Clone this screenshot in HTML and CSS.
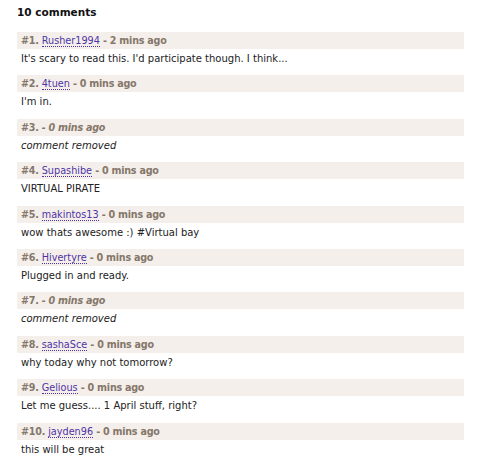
FILE: index.html
```html
<!DOCTYPE html>
<html>
<head>
<meta charset="utf-8">
<link rel="stylesheet" href="styles.css">
</head>
<body>
<div class="comments">
  <h3 class="title">10 comments</h3>
  <div class="comment">
    <div class="meta"><span class="num">#1.</span> <a class="user" href="#">Rusher1994</a> <span class="time">- 2 mins ago</span></div>
    <div class="body">It's scary to read this. I'd participate though. I think...</div>
  </div>
  <div class="comment">
    <div class="meta"><span class="num">#2.</span> <a class="user" href="#">4tuen</a> <span class="time">- 0 mins ago</span></div>
    <div class="body">I'm in.</div>
  </div>
  <div class="comment removed">
    <div class="meta"><span class="num">#3.</span> <span class="time">- 0 mins ago</span></div>
    <div class="body">comment removed</div>
  </div>
  <div class="comment">
    <div class="meta"><span class="num">#4.</span> <a class="user" href="#">Supashibe</a> <span class="time">- 0 mins ago</span></div>
    <div class="body">VIRTUAL PIRATE</div>
  </div>
  <div class="comment">
    <div class="meta"><span class="num">#5.</span> <a class="user" href="#">makintos13</a> <span class="time">- 0 mins ago</span></div>
    <div class="body">wow thats awesome :) #Virtual bay</div>
  </div>
  <div class="comment">
    <div class="meta"><span class="num">#6.</span> <a class="user" href="#">Hivertyre</a> <span class="time">- 0 mins ago</span></div>
    <div class="body">Plugged in and ready.</div>
  </div>
  <div class="comment removed">
    <div class="meta"><span class="num">#7.</span> <span class="time">- 0 mins ago</span></div>
    <div class="body">comment removed</div>
  </div>
  <div class="comment">
    <div class="meta"><span class="num">#8.</span> <a class="user" href="#">sashaSce</a> <span class="time">- 0 mins ago</span></div>
    <div class="body">why today why not tomorrow?</div>
  </div>
  <div class="comment">
    <div class="meta"><span class="num">#9.</span> <a class="user" href="#">Gelious</a> <span class="time">- 0 mins ago</span></div>
    <div class="body">Let me guess.... 1 April stuff, right?</div>
  </div>
  <div class="comment">
    <div class="meta"><span class="num">#10.</span> <a class="user" href="#">jayden96</a> <span class="time">- 0 mins ago</span></div>
    <div class="body">this will be great</div>
  </div>
</div>
</body>
</html>
```
FILE: styles.css
```css
html, body {
  margin: 0;
  padding: 0;
  background: #ffffff;
}
body {
  font-family: "DejaVu Sans", Verdana, sans-serif;
  font-size: 10px;
  color: #222222;
}
.comments {
  width: 447px;
  padding: 5px 0 0 17px;
}
.title {
  margin: 0 0 13px 0;
  font-size: 10.5px;
  font-weight: bold;
  color: #111111;
  line-height: 14px;
}
.comment {
  margin-bottom: 9.4px;
}
.meta {
  background: #f4efeb;
  padding: 3px 4px;
  height: 11px;
  line-height: 11px;
  font-size: 9.6px;
  font-weight: bold;
  letter-spacing: -0.25px;
  color: #85776a;
}
.user {
  font-size: 9.7px;
  font-weight: normal;
  letter-spacing: 0;
  color: #4f33a6;
  text-decoration: none;
  border-bottom: 1px dotted #4f33a6;
}
.body {
  padding: 3px 4px 0 4px;
  line-height: 14px;
}
.removed .time,
.removed .body {
  font-style: italic;
}
```
